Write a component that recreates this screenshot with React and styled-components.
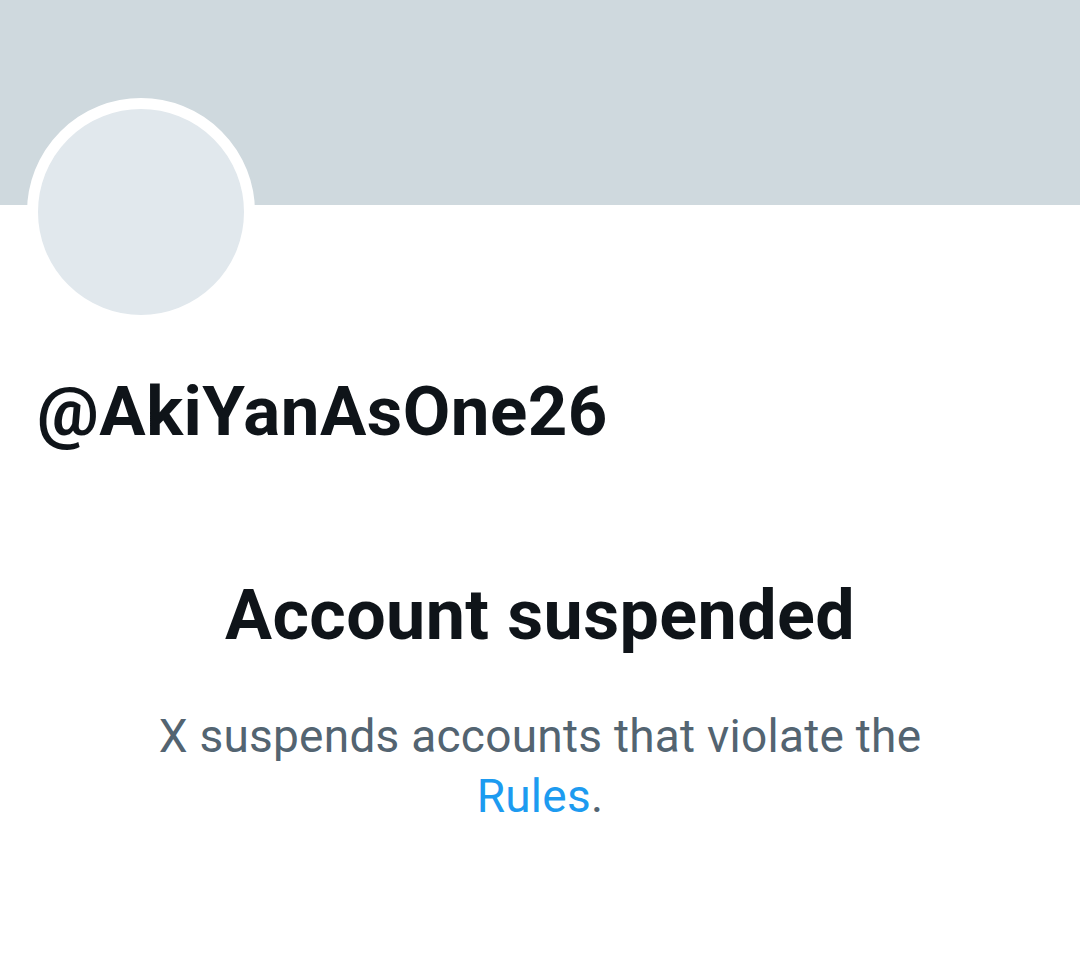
import styled, { createGlobalStyle } from "styled-components";

const GlobalStyle = createGlobalStyle`
  body {
    margin: 0;
    background: #ffffff;
    font-family: Roboto, "Liberation Sans", sans-serif;
  }
`;

const Page = styled.main`
  width: 1080px;
  height: 964px;
  background: #ffffff;
  display: flex;
  flex-direction: column;
  overflow: hidden;
`;

const Banner = styled.div`
  height: 205px;
  background: #cfd9de;
`;

const Avatar = styled.div`
  width: 206px;
  height: 206px;
  margin: -107px 0 0 27px;
  border-radius: 50%;
  border: 11px solid #ffffff;
  background: #e1e8ed;
`;

const Handle = styled.h1`
  margin: 51px 0 0 37px;
  font-size: 69px;
  font-weight: 700;
  line-height: 1;
  letter-spacing: 0.5px;
  color: #0f1419;
`;

const Notice = styled.section`
  margin-top: 134px;
  display: flex;
  flex-direction: column;
  align-items: center;
  text-align: center;
`;

const Title = styled.h2`
  margin: 0;
  font-size: 70px;
  font-weight: 700;
  line-height: 1;
  letter-spacing: 0.4px;
  color: #0f1419;
`;

const Message = styled.p`
  margin: 56px 0 0;
  max-width: 820px;
  font-size: 46px;
  line-height: 60px;
  letter-spacing: 0.25px;
  color: #536471;
`;

const RulesLink = styled.a`
  color: #1d9bf0;
  text-decoration: none;
`;

export default function App() {
  return (
    <>
      <GlobalStyle />
      <Page>
        <Banner />
        <Avatar />
        <Handle>@AkiYanAsOne26</Handle>
        <Notice>
          <Title>Account suspended</Title>
          <Message>
            X suspends accounts that violate the
            <br />
            <RulesLink href="#">Rules</RulesLink>.
          </Message>
        </Notice>
      </Page>
    </>
  );
}
